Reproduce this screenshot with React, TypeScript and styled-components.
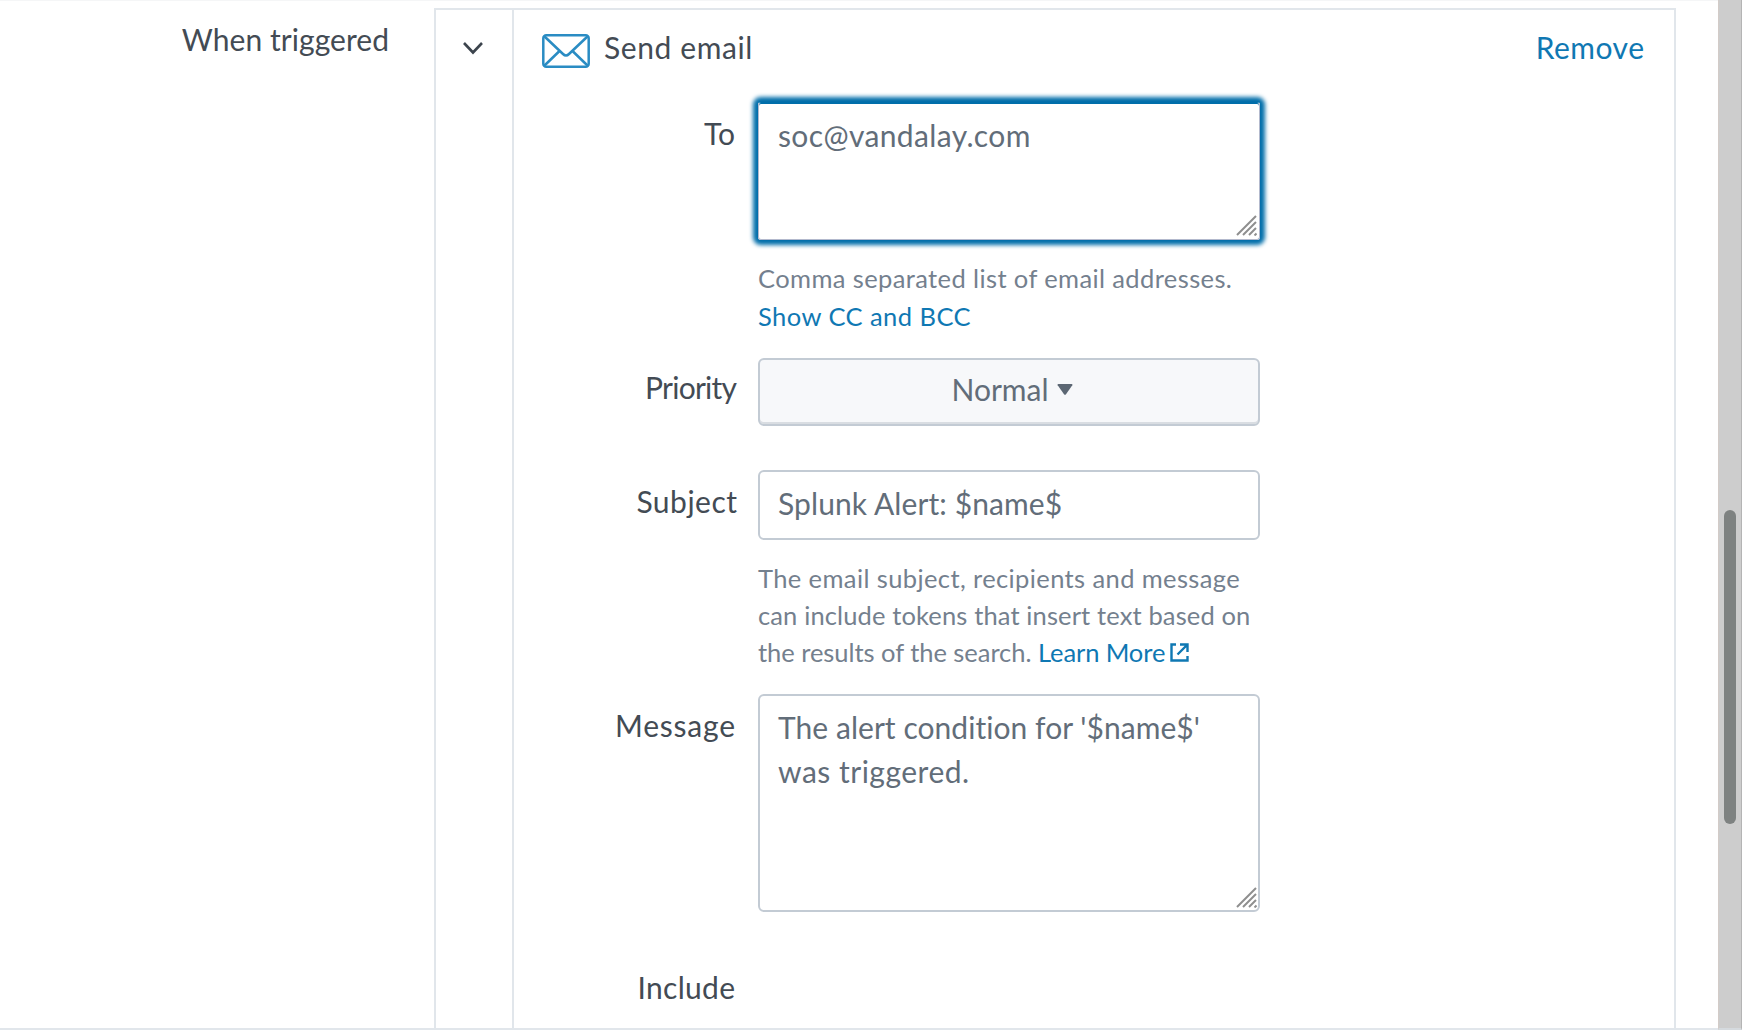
import React from "react";
import styled, { createGlobalStyle } from "styled-components";

const color = {
  text: "#434b54",
  input: "#626d79",
  help: "#74808e",
  link: "#0f78b3",
  focus: "#006eaa",
  line: "#e1e6eb",
  field: "#c3cbd4",
};

const Global = createGlobalStyle`
  * { box-sizing: border-box; }
  body {
    margin: 0;
    background: #fff;
    color: ${color.text};
    font: 30px/44px Lato, "Open Sans", sans-serif;
    font-variant-ligatures: none;
    overflow: hidden;
  }
`;

const Frame = styled.main`
  display: flex;
  width: 1742px;
  height: 1036px;
  padding-bottom: 6px;
`;

const Content = styled.div`
  display: flex;
  flex: 1;
  padding-right: 42px;
  border-top: 1px solid #f5f6f7;
  border-bottom: 2px solid ${color.line};
`;

const Track = styled.div`
  width: 24px;
  padding: 510px 6px 0;
  background: #cdcdcd;
  border-left: 1px solid #d3ccc8;
  border-right: 1px solid #b4b4b4;
  border-bottom: 2px solid #d5dade;
`;

const Thumb = styled.div`
  width: 12px;
  height: 314px;
  margin-left: -1px;
  border-radius: 6px;
  background: #7e8281;
`;

const Text = styled.span<{ $track?: number }>`
  letter-spacing: ${(p) => p.$track ?? 0}px;
  margin-right: ${(p) => -(p.$track ?? 0)}px;
  white-space: pre;
`;

const SectionLabel = styled.div`
  width: 434px;
  padding: 16px 45px 0 0;
  text-align: right;
`;

const Card = styled.section`
  display: flex;
  flex: 1;
  margin-top: 7px;
  border: 2px solid ${color.line};
  border-bottom: 0;
`;

const Toggle = styled.div`
  display: flex;
  justify-content: center;
  align-items: flex-start;
  width: 78px;
  padding: 30px 2px 0 0;
  border-right: 2px solid ${color.line};
`;

const Body = styled.div`
  flex: 1;
`;

const Header = styled.header`
  display: flex;
  align-items: flex-start;
  height: 92px;
  padding: 15px 30px 0 28px;
`;

const Envelope = styled.svg`
  margin: 9px 14px 0 0;
`;

const Link = styled.a`
  color: ${color.link};
`;

const Remove = styled(Link)`
  margin-left: auto;
`;

const Row = styled.div<{ $gap: number }>`
  display: flex;
  margin-bottom: ${(p) => p.$gap}px;
`;

const Label = styled.label<{ $top?: number; $end?: number }>`
  width: 244px;
  padding: ${(p) => p.$top ?? 9}px ${(p) => p.$end ?? 23}px 0 0;
  text-align: right;
`;

const Field = styled.div`
  width: 502px;
`;

const TextBox = styled.div<{ $height: number; $focus?: boolean }>`
  position: relative;
  height: ${(p) => p.$height}px;
  padding: 9px 18px 0;
  border: 2px solid ${color.field};
  border-radius: 6px;
  color: ${color.input};
  ${(p) =>
    p.$focus &&
    `padding: 10px 19px 0;
     border: 1px solid #b3b9cd;
     border-radius: 3px;
     border-top-color: ${color.focus};
     box-shadow: inset 0 1px 0 ${color.focus}, 0 0 4px 5px ${color.focus};`}
`;

const Select = styled.button`
  display: flex;
  justify-content: center;
  align-items: flex-start;
  width: 100%;
  height: 68px;
  padding: 7px 0 0 6px;
  border: 2px solid ${color.field};
  border-radius: 6px;
  background: #f7f8fa;
  box-shadow: inset 0 -2px 0 #d9dde2;
  color: ${color.input};
  font: inherit;
`;

const Caret = styled.svg`
  margin: 17px 0 0 8px;
`;

const Help = styled.div<{ $line: number; $top: number }>`
  padding-top: ${(p) => p.$top}px;
  color: ${color.help};
  font-size: 25.5px;
  line-height: ${(p) => p.$line}px;
`;

const External = styled.svg`
  margin-left: 5px;
`;

const GripMark = styled.svg<{ $inset: number }>`
  position: absolute;
  right: ${(p) => p.$inset}px;
  bottom: ${(p) => p.$inset + 1}px;
`;

const Grip = ({ inset = 1 }: { inset?: number }) => (
  <GripMark $inset={inset} width="21" height="21" viewBox="0 0 21 21" stroke="#8f8f8f" strokeWidth="2" fill="none">
    <path d="M1 20 20 1M7 20 20 7M13 20l7-7M18.5 20.5l2-2" />
  </GripMark>
);

export default function App() {
  return (
    <Frame>
      <Global />
      <Content>
        <SectionLabel>
          <Text $track={0.05}>When triggered</Text>
        </SectionLabel>
        <Card>
          <Toggle>
            <svg width="22" height="16" viewBox="0 0 22 16" fill="none" stroke="#3c444d" strokeWidth="2.6">
              <path d="M2 3 11 12.5 20 3" />
            </svg>
          </Toggle>
          <Body>
            <Header>
              <Envelope width="48" height="34" viewBox="0 0 48 34" fill="none" stroke="#2a8cc3" strokeWidth="2.500">
                <rect x="1.3" y="1.3" width="45.4" height="31.4" rx="3" />
                <path d="M2 2 21 20q3 3 6 0L46 2M2 32 17 17.5M46 32 31 17.5" />
              </Envelope>
              <Text $track={0.6}>Send email</Text>
              <Remove>
                <Text $track={0.5}>Remove</Text>
              </Remove>
            </Header>
            <Row $gap={23}>
              <Label><Text>To</Text></Label>
              <Field>
                <TextBox $height={138} $focus>
                  <Text $track={0.37}>soc@vandalay.com</Text>
                  <Grip inset={2} />
                </TextBox>
                <Help $line={38} $top={19}>
                  <Text $track={0.39}>Comma separated list of email addresses.</Text>
                  <br />
                  <Link><Text $track={0.45}>Show CC and BCC</Text></Link>
                </Help>
              </Field>
            </Row>
            <Row $gap={44}>
              <Label $top={7} $end={21}><Text $track={-0.75}>Priority</Text></Label>
              <Field>
                <Select>
                  <Text>Normal</Text>
                  <Caret width="16" height="12" viewBox="0 0 16 12" fill="#5c6773">
                    <path d="M1.5 0h13q1.5 0 .8 1.3L9 10.2q-1 1.3-2 0L.7 1.300Q0 0 1.500 0z" />
                  </Caret>
                </Select>
              </Field>
            </Row>
            <Row $gap={23}>
              <Label $end={21}><Text $track={0.5}>Subject</Text></Label>
              <Field>
                <TextBox $height={70}>
                  <Text $track={0.1}>Splunk Alert: $name$</Text>
                </TextBox>
                <Help $line={37} $top={20}>
                  <Text $track={0.39}>The email subject, recipients and message</Text>
                  <br />
                  <Text $track={0.13}>can include tokens that insert text based on</Text>
                  <br />
                  <Text $track={-0.04}>the results of the search. </Text>
                  <Link>
                    <Text $track={-0.1}>Learn More</Text>
                    <External width="19" height="19" viewBox="0 0 19 19" fill="none" stroke="#0f78b3" strokeWidth="2.400">
                      <path d="M6 1.500H1.500v16h16V13M10 1.500h7.500V9M17 2 7.500 11.500" />
                    </External>
                  </Link>
                </Help>
              </Field>
            </Row>
            <Row $gap={44}>
              <Label><Text $track={0.78}>Message</Text></Label>
              <Field>
                <TextBox $height={218}>
                  <Text $track={0.05}>The alert condition for '$name$'</Text>
                  <br />
                  <Text $track={0.5}>was triggered.</Text>
                  <Grip />
                </TextBox>
              </Field>
            </Row>
            <Row $gap={0}>
              <Label><Text $track={0.3}>Include</Text></Label>
            </Row>
          </Body>
        </Card>
      </Content>
      <Track>
        <Thumb />
      </Track>
    </Frame>
  );
}
